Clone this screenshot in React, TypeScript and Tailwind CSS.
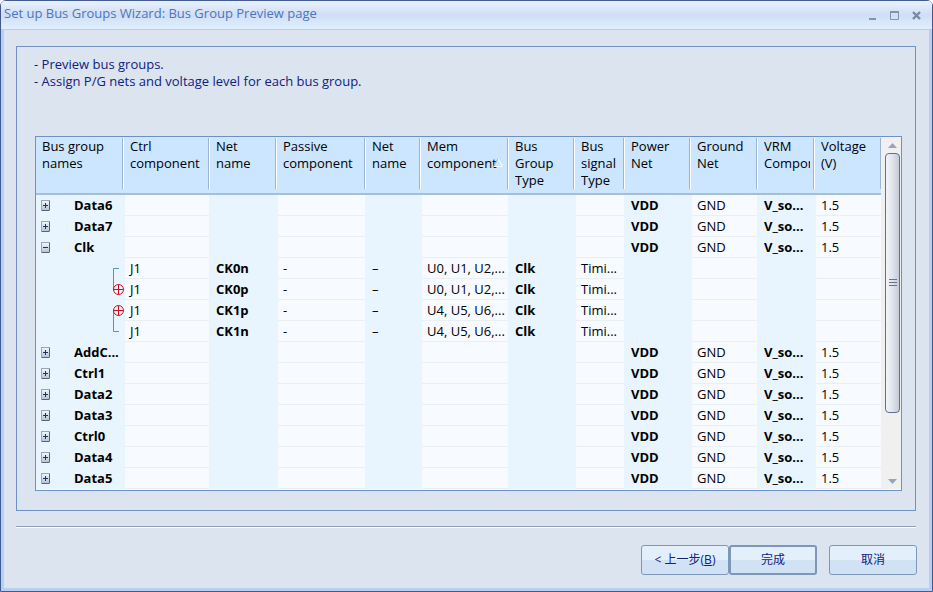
import React from 'react';
import { useState } from 'react';

interface Net {
  id: string;
  name: string;
  mem: string;
  marked: boolean;
  end: 'top' | 'bottom';
}

interface BusGroup {
  name: string;
  label: string;
  nets: Net[];
}

const columns = [
  { label: 'Bus group names', width: 'w-[87px]' },
  { label: 'Ctrl component', width: 'w-[86px]' },
  { label: 'Net name', width: 'w-[67px]' },
  { label: 'Passive component', width: 'w-[89px]' },
  { label: 'Net name', width: 'w-[55px]' },
  { label: 'Mem component', width: 'w-[88px]', sorted: true },
  { label: 'Bus Group Type', width: 'w-[66px]' },
  { label: 'Bus signal Type', width: 'w-[50px]' },
  { label: 'Power Net', width: 'w-[66px]' },
  { label: 'Ground Net', width: 'w-[67px]' },
  { label: 'VRM Component', width: 'w-[57px]' },
  { label: 'Voltage (V)', width: 'w-[67px]' },
];

const clkNets: Net[] = [
  { id: 'ck0n', name: 'CK0n', mem: 'U0, U1, U2,...', marked: false, end: 'top' },
  { id: 'ck0p', name: 'CK0p', mem: 'U0, U1, U2,...', marked: true, end: 'bottom' },
  { id: 'ck1p', name: 'CK1p', mem: 'U4, U5, U6,...', marked: true, end: 'top' },
  { id: 'ck1n', name: 'CK1n', mem: 'U4, U5, U6,...', marked: false, end: 'bottom' },
];

const groups: BusGroup[] = [
  { name: 'Data6', label: 'Data6', nets: [] },
  { name: 'Data7', label: 'Data7', nets: [] },
  { name: 'Clk', label: 'Clk', nets: clkNets },
  { name: 'AddCmd', label: 'AddC...', nets: [] },
  { name: 'Ctrl1', label: 'Ctrl1', nets: [] },
  { name: 'Data2', label: 'Data2', nets: [] },
  { name: 'Data3', label: 'Data3', nets: [] },
  { name: 'Ctrl0', label: 'Ctrl0', nets: [] },
  { name: 'Data4', label: 'Data4', nets: [] },
  { name: 'Data5', label: 'Data5', nets: [] },
];

function ToggleIcon({ open }: { open: boolean }) {
  return (
    <svg width="9" height="11" viewBox="0 0 9 11" shapeRendering="crispEdges">
      <defs>
        <linearGradient id="toggleFill" x1="0" y1="0" x2="0" y2="1">
          <stop offset="0" stopColor="#f4f8fc" />
          <stop offset="1" stopColor="#b4c2d4" />
        </linearGradient>
      </defs>
      <rect x="0.5" y="0.5" width="8" height="10" fill="url(#toggleFill)" stroke="#9aa6b8" />
      <path d="M8.5 1v9M1 10.5h7" stroke="#566479" />
      <path d="M2 5.5h5" stroke="#1f3358" />
      {!open && <path d="M4.5 3v5" stroke="#1f3358" />}
    </svg>
  );
}

// Bracket that ties the two nets of a differential pair together
function PairIcon({ net }: { net: Net }) {
  return (
    <svg width="12" height="21" viewBox="0 0 12 21">
      {net.marked ? (
        <>
          <path d={net.end === 'top' ? 'M0.5 10v11' : 'M0.5 0v11'} stroke="#4a96cc" />
          <g stroke="#d40a1e" fill="none">
            <circle cx="5.5" cy="10.5" r="5" />
            <path d="M0.5 10.5h10M5.5 5.5v10" />
          </g>
        </>
      ) : (
        <path
          d={net.end === 'top' ? 'M6 10.5H0.5V21' : 'M6 10.5H0.5V0'}
          stroke="#4a96cc"
          fill="none"
        />
      )}
    </svg>
  );
}

function Row({ first, cells }: { first: React.ReactNode; cells: string[] }) {
  return (
    <tr className="h-[21px]">
      <td className="relative z-10 h-[21px] bg-[#e8f5fe] p-0">{first}</td>
      {cells.map((cell, i) => (
        <td
          key={i}
          className={
            i % 2 === 0
              ? 'h-[21px] overflow-hidden border-l-2 border-[#e8f5fe] bg-[#f7fbff] p-0 whitespace-nowrap'
              : 'h-[21px] overflow-hidden bg-[#e8f5fe] p-0 pl-[7px] whitespace-nowrap'
          }
        >
          {i % 2 === 0 ? (
            <div className="h-[21px] border-b border-[#e9eff5] pl-[5px] leading-[21px]">{cell}</div>
          ) : (
            <span className={cell === '–' ? 'font-normal' : 'font-bold'}>{cell}</span>
          )}
        </td>
      ))}
    </tr>
  );
}

// GND sits in a light column, so only the shaded columns come out bold
const groupCells = ['', '', '', '', '', '', '', 'VDD', 'GND', 'V_so...', '1.5'];

function BusTable() {
  const [open, setOpen] = useState<Record<string, boolean>>({ Clk: true });

  const toggle = (name: string) => {
    setOpen({ ...open, [name]: !open[name] });
  };

  return (
    <table className="w-full min-w-0 flex-1 table-fixed border-separate border-spacing-0 text-[13px] leading-[17px] text-black">
      <colgroup>
        {columns.map((col, i) => (
          <col key={i} className={col.width} />
        ))}
      </colgroup>
      <thead>
        <tr>
          {columns.map((col, i) => (
            <th
              key={i}
              className="h-[58px] border-b-2 border-[#a3bfda] bg-[#cce6ff] p-0 pt-[2px] text-left align-top font-normal"
            >
              <div
                className={`relative h-[51px] border-r border-r-[#9db5d0] pl-[6px] ${
                  i === 0 ? '' : 'border-l border-l-white'
                }`}
              >
                <div className="-mt-px mr-[3px] overflow-hidden">{col.label}</div>
                {col.sorted && (
                  <svg className="absolute top-[20px] right-[4px]" width="10" height="9" viewBox="0 0 10 9">
                    <path d="M0.5 8.5H9.5L5 0.5" stroke="#ffffff" fill="none" />
                    <path d="M0.5 8.5L5 0.5" stroke="#9db5d0" />
                  </svg>
                )}
              </div>
            </th>
          ))}
        </tr>
      </thead>
      <tbody>
        {groups.map((group) => (
          <React.Fragment key={group.name}>
            <Row
              first={
                <div className="flex items-center pl-[5px]">
                  <button
                    className="mr-6 shrink-0"
                    aria-label={`Toggle ${group.name}`}
                    aria-expanded={!!open[group.name]}
                    onClick={() => toggle(group.name)}
                  >
                    <ToggleIcon open={!!open[group.name]} />
                  </button>
                  <span className="font-bold whitespace-nowrap">{group.label}</span>
                </div>
              }
              cells={groupCells}
            />
            {open[group.name] &&
              group.nets.map((net) => (
                <Row
                  key={net.id}
                  first={
                    <div className="-mr-[2px] flex justify-end">
                      <PairIcon net={net} />
                    </div>
                  }
                  cells={['J1', net.name, '-', '–', net.mem, 'Clk', 'Timi...', '', '', '', '']}
                />
              ))}
          </React.Fragment>
        ))}
      </tbody>
    </table>
  );
}

function ScrollBar() {
  return (
    <div className="flex w-5 shrink-0 flex-col items-center bg-[#f0f0f0] pl-[3px]">
      <button aria-label="Scroll up" className="flex h-4 w-full items-center justify-center">
        <svg width="9" height="5" viewBox="0 0 9 5">
          <path d="M4.5 0L9 5H0z" fill="#99a5b5" />
        </svg>
      </button>
      <div className="flex w-[15px] flex-[260] flex-col items-center justify-center gap-[2px] rounded-sm border border-[#5f7095] bg-linear-to-r from-[#f3f5f8] via-[#dfe4eb] to-[#c3cbd9]">
        <span className="h-px w-2 bg-[#66738c]" />
        <span className="h-px w-2 bg-[#66738c]" />
        <span className="h-px w-2 bg-[#66738c]" />
      </div>
      <div className="flex-[61]" />
      <button aria-label="Scroll down" className="flex h-4 w-full items-center justify-center">
        <svg width="9" height="5" viewBox="0 0 9 5">
          <path d="M0 0h9L4.5 5z" fill="#99a5b5" />
        </svg>
      </button>
    </div>
  );
}

function TitleBar() {
  return (
    <header className="flex h-[29px] items-start justify-between rounded-t border-b border-[#a9d3f0] bg-linear-to-b from-[#e9f2fd] via-[#d0def5] to-[#e0f0fe] pr-[11px] pl-[3px]">
      <h1 className="pt-[3px] text-[13px] leading-[18px] text-[#4a76bd]">
        Set up Bus Groups Wizard: Bus Group Preview page
      </h1>
      <div className="flex gap-[13px] pt-[9px]">
        <button aria-label="Minimize">
          <svg width="9" height="11" viewBox="0 0 9 11">
            <path d="M1 9h7" stroke="#8094b2" strokeWidth="2" />
          </svg>
        </button>
        <button aria-label="Maximize">
          <svg width="9" height="11" viewBox="0 0 9 11">
            <path d="M0.5 2v7.5h8V2" stroke="#8094b2" fill="none" />
            <path d="M0 2h9" stroke="#8094b2" strokeWidth="2" />
          </svg>
        </button>
        <button aria-label="Close">
          <svg width="9" height="11" viewBox="0 0 9 11">
            <path d="M1 2l7 7M8 2l-7 7" stroke="#7589a8" strokeWidth="2.4" />
          </svg>
        </button>
      </div>
    </header>
  );
}

const buttonClass =
  'h-[30px] w-[88px] rounded-[3px] border-[#7d97bb] bg-linear-to-b from-[#e3f0fc] from-50% to-[#d1e2f5] to-50% text-[12px] text-[#10217f]';

export default function App() {
  return (
    <div className="flex min-h-screen flex-col rounded-t-md border border-[#415a92] bg-[#dbe4ef] font-['Open_Sans','Noto_Sans_CJK_SC',sans-serif]">
      <TitleBar />
      <div className="flex flex-1 flex-col border-3 border-t-0 border-[#b7cff5] px-3 pt-4">
        <main className="mr-px flex flex-1 flex-col border border-[#6b93c6] pt-[9px] pr-[13px] pb-[19px] pl-[18px]">
          <div className="-ml-px text-[13px] leading-[17px] text-[#10217f]">
            <p>- Preview bus groups.</p>
            <p>- Assign P/G nets and voltage level for each bus group.</p>
          </div>
          <div className="mt-[46px] flex border border-[#6b93c6] bg-[#f7fbff] pb-px">
            <BusTable />
            <ScrollBar />
          </div>
        </main>
        <hr className="mt-[15px] mr-px h-[2px] border-t border-b border-t-[#93a1b6] border-b-white" />
        <footer className="mt-[17px] mb-[13px] flex justify-end">
          <button className={`${buttonClass} border`}>
            &lt; 上一步(<u>B</u>)
          </button>
          <button className={`${buttonClass} mr-3 border-2`}>完成</button>
          <button className={`${buttonClass} border`}>取消</button>
        </footer>
      </div>
    </div>
  );
}
